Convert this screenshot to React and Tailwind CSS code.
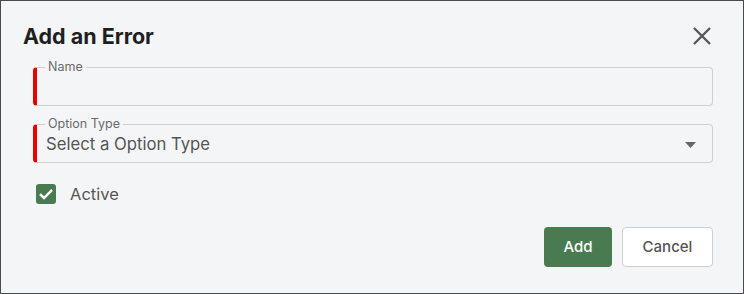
import React from 'react';

const CloseIcon = () => (
  <svg width="20" height="20" viewBox="0 0 20 20" fill="none">
    <path d="M2 2 L18 18 M18 2 L2 18" stroke="#555" strokeWidth="2.3" strokeLinecap="butt" />
  </svg>
);

const Field = ({ label, children }) => (
  <fieldset className="ml-[10px] rounded-[4px] border border-[#cfcfcf] border-l-4 border-l-[#ee0000] pl-[8px] pr-[16px]">
    <legend className="px-[3px] text-[12.5px] leading-4 text-[#6b6b6b]">{label}</legend>
    <div className="h-[30px] flex items-start">{children}</div>
  </fieldset>
);

export default function App() {
  return (
    <div
      className="w-[744px] h-[294px] border border-[#4a4a4a] bg-[#f4f5f7] pl-[22px] pr-[30px] pt-[21px]"
      style={{ fontFamily: 'Inter, "Noto Sans", sans-serif' }}
    >
      <div className="flex items-center justify-between">
        <h2 className="text-[21.5px] leading-7 font-bold text-[#1f1f1f]">Add an Error</h2>
        <button className="mr-[1px]"><CloseIcon /></button>
      </div>

      <div className="mt-[9px] flex flex-col gap-[10px]">
        <Field label="Name">
          <div className="w-full" />
        </Field>
        <Field label="Option Type">
          <div className="w-full flex items-center justify-between">
            <span className="pl-[1px] text-[16.7px] leading-6 text-[#555]">Select a Option Type</span>
            <svg width="11" height="6" viewBox="0 0 11 6" className="mt-[1px]">
              <path d="M0 0 L11 0 L5.5 6 Z" fill="#666" />
            </svg>
          </div>
        </Field>
      </div>

      <label className="mt-[19px] ml-[13px] flex items-center gap-[14px]">
        <span className="w-[20px] h-[20px] rounded-[3px] bg-[#4a7b50] flex items-center justify-center">
          <svg width="20" height="20" viewBox="0 0 20 20" fill="none">
            <path d="M4 10.2 L8 14 L16 5.8" stroke="#fff" strokeWidth="2.5" />
          </svg>
        </span>
        <span className="text-[16.5px] leading-6 text-[#555]">Active</span>
      </label>

      <div className="mt-[21px] flex justify-end gap-[10px]">
        <button className="w-[68px] h-[40px] rounded-[4px] bg-[#4a7b50] text-white text-[15px] font-medium">Add</button>
        <button className="w-[91px] h-[40px] rounded-[4px] bg-white border border-[#cfcfcf] text-[#555] text-[15px] font-medium">Cancel</button>
      </div>
    </div>
  );
}
